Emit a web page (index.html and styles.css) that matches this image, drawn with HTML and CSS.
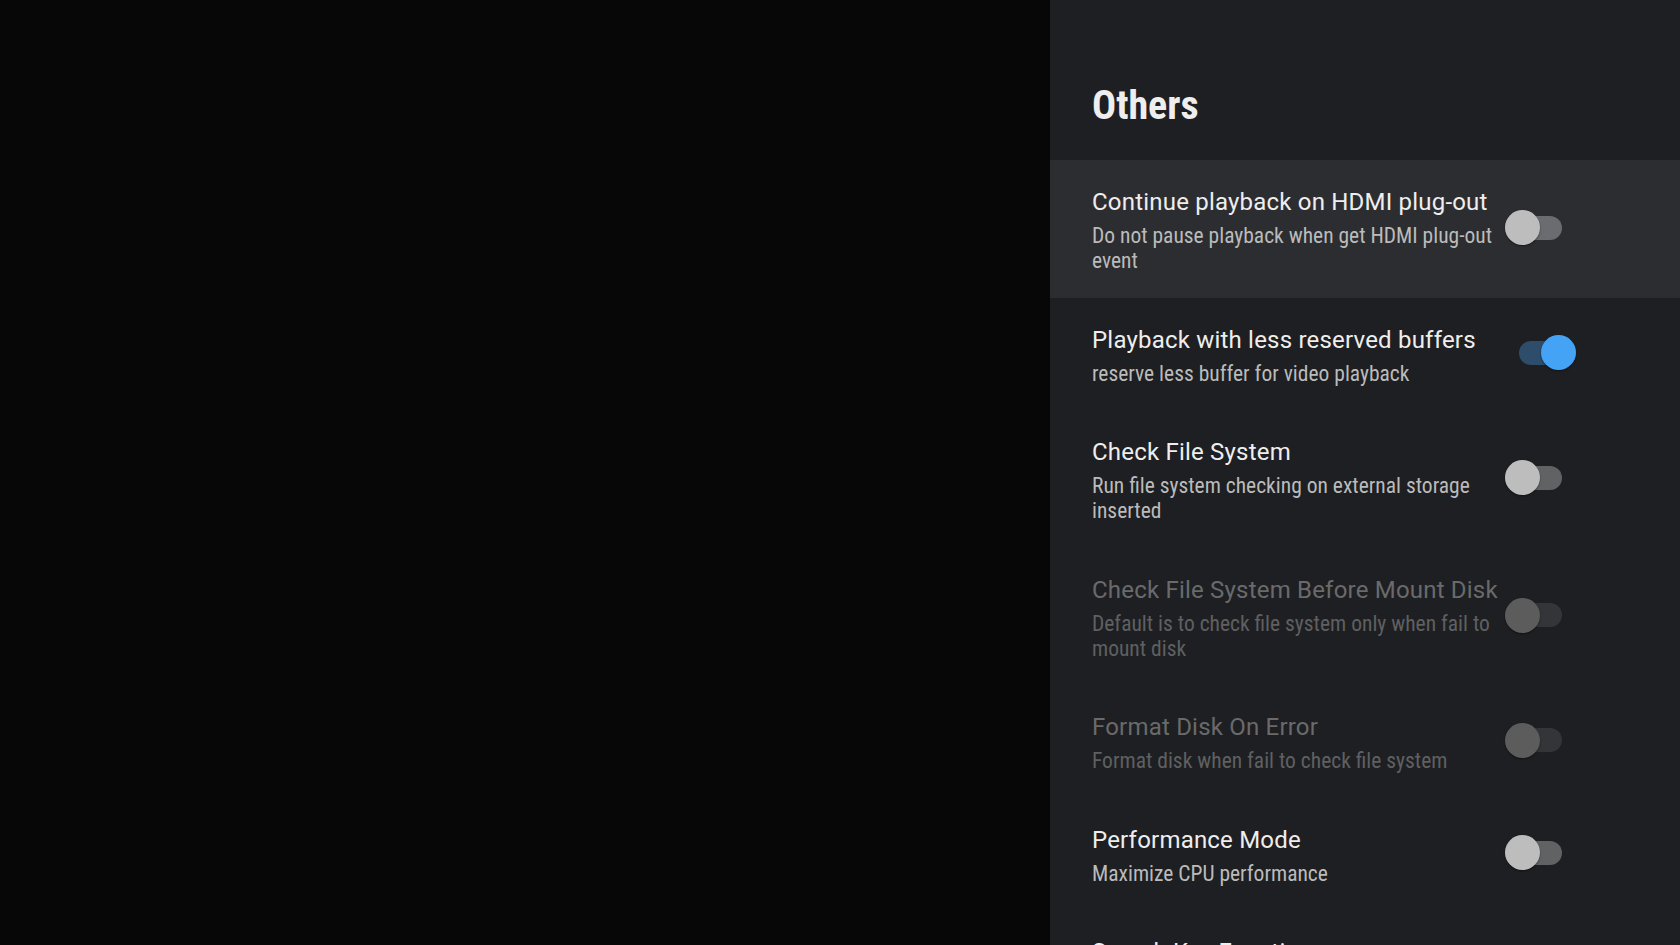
FILE: index.html
```html
<!DOCTYPE html>
<html lang="en">
<head>
<meta charset="utf-8">
<title>Others</title>
<link rel="stylesheet" href="styles.css">
</head>
<body>
<div class="screen">
  <div class="video"></div>
  <aside class="panel">
    <header class="panel-header">
      <h1 class="panel-title">Others</h1>
    </header>
    <ul class="prefs">
      <li class="pref pref--focused">
        <div class="pref-text">
          <div class="pref-title">Continue playback on HDMI plug-out</div>
          <div class="pref-summary">Do not pause playback when get HDMI plug-out event</div>
        </div>
        <span class="switch"><span class="track"></span><span class="thumb"></span></span>
      </li>
      <li class="pref">
        <div class="pref-text">
          <div class="pref-title">Playback with less reserved buffers</div>
          <div class="pref-summary">reserve less buffer for video playback</div>
        </div>
        <span class="switch switch--on"><span class="track"></span><span class="thumb"></span></span>
      </li>
      <li class="pref">
        <div class="pref-text">
          <div class="pref-title">Check File System</div>
          <div class="pref-summary">Run file system checking on external storage inserted</div>
        </div>
        <span class="switch"><span class="track"></span><span class="thumb"></span></span>
      </li>
      <li class="pref pref--disabled">
        <div class="pref-text">
          <div class="pref-title">Check File System Before Mount Disk</div>
          <div class="pref-summary">Default is to check file system only when fail to mount disk</div>
        </div>
        <span class="switch"><span class="track"></span><span class="thumb"></span></span>
      </li>
      <li class="pref pref--disabled">
        <div class="pref-text">
          <div class="pref-title">Format Disk On Error</div>
          <div class="pref-summary">Format disk when fail to check file system</div>
        </div>
        <span class="switch"><span class="track"></span><span class="thumb"></span></span>
      </li>
      <li class="pref">
        <div class="pref-text">
          <div class="pref-title">Performance Mode</div>
          <div class="pref-summary">Maximize CPU performance</div>
        </div>
        <span class="switch"><span class="track"></span><span class="thumb"></span></span>
      </li>
      <li class="pref">
        <div class="pref-text">
          <div class="pref-title">Search Key Function</div>
          <div class="pref-summary">Select search key behavior</div>
        </div>
        <span class="switch"><span class="track"></span><span class="thumb"></span></span>
      </li>
    </ul>
  </aside>
</div>
</body>
</html>
```
FILE: styles.css
```css
* { box-sizing: border-box; }
html, body { margin: 0; padding: 0; }
body {
  background: #070707;
  font-family: Roboto, "Noto Sans", sans-serif;
  overflow: hidden;
}
.screen {
  display: flex;
  width: 1680px;
  height: 945px;
  overflow: hidden;
}
.video {
  flex: 0 0 1050px;
  background: #070707;
}
.panel {
  flex: 0 0 630px;
  background: #1e1f22;
  height: 945px;
  overflow: hidden;
}
.panel-header {
  height: 160px;
  padding: 82px 0 0 42px;
}
.panel-title {
  margin: 0;
  font-family: "Roboto Condensed", Roboto, sans-serif;
  font-weight: 700;
  font-size: 40px;
  line-height: 48px;
  color: #eeeeee;
}
.prefs {
  list-style: none;
  margin: 0;
  padding: 0;
}
.pref {
  display: flex;
  align-items: center;
  padding: 28px 0 24.5px 42px;
}
.pref--focused { background: #2c2d31; }
.pref-text {
  flex: 0 0 410px;
}
.pref-title {
  font-family: Roboto, sans-serif;
  font-size: 24px;
  letter-spacing: 0.2px;
  line-height: 28px;
  color: #eeeeee;
  white-space: nowrap;
}
.pref-summary {
  margin-top: 7px;
  font-family: "Roboto Condensed", Roboto, sans-serif;
  font-size: 21.5px;
  line-height: 25px;
  color: #bbbbbb;
}
.pref--disabled .pref-title { color: #6a6a6b; }
.pref--disabled .pref-summary { color: #5f6061; }

.switch {
  position: relative;
  flex: 0 0 57px;
  height: 35px;
  margin-left: 3px;
  margin-top: -6px;
}
.track {
  position: absolute;
  left: 0;
  top: 5.5px;
  width: 57px;
  height: 24px;
  border-radius: 12px;
  background: rgba(255, 255, 255, 0.3);
}
.thumb {
  position: absolute;
  left: 0;
  top: 0;
  width: 35px;
  height: 35px;
  border-radius: 50%;
  background: #bdbdbd;
  box-shadow: 0 1px 2px rgba(0, 0, 0, 0.45);
}
.switch--on { margin-left: 17px; }
.switch--on .track { background: #2d4d6b; }
.switch--on .thumb { left: 22px; background: #45a3f5; }
.pref--disabled .track { background: rgba(255, 255, 255, 0.1); }
.pref--disabled .thumb { background: #5c5c5d; }
```
